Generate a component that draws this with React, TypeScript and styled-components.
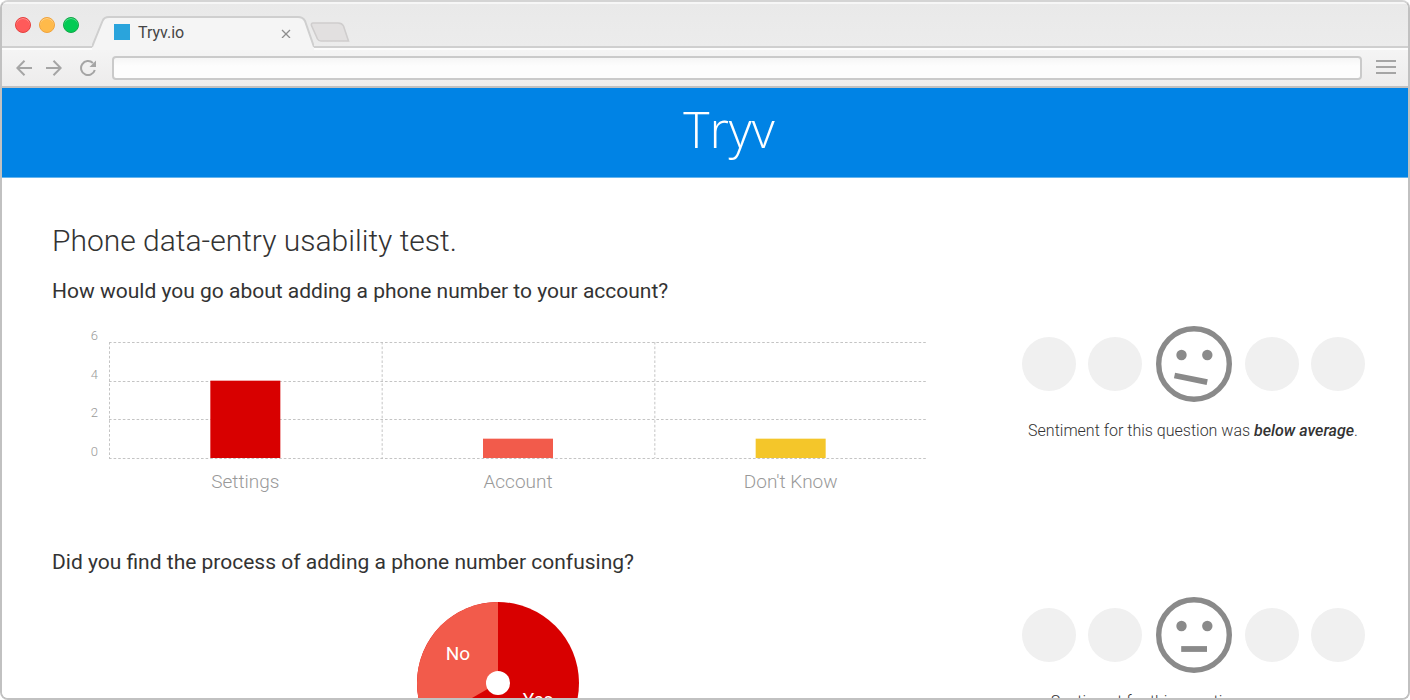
import React from "react";
import styled, { createGlobalStyle } from "styled-components";

const GlobalStyle = createGlobalStyle`
  * { box-sizing: border-box; }
  body { margin: 0; background: #fff; color: #333; font-family: Roboto, sans-serif; }
  h1, h2, p { margin: 0; }
  button { padding: 0; border: 0; background: none; cursor: pointer; }
`;

const Browser = styled.div`
  display: flex;
  flex-direction: column;
  height: 100vh;
  overflow: hidden;
  border: 2px solid #c1c1c1;
  border-top-color: #d4d4d4;
  border-radius: 8px;
`;

const TabStrip = styled.div`
  display: flex;
  flex: none;
  align-items: flex-start;
  height: 46px;
  border-bottom: 2px solid #cfcfcf;
  border-top: 2px solid #f6f6f6;
  background: linear-gradient(#e9e9e9, #ececec);
`;

const WindowButtons = styled.div`
  display: flex;
  gap: 8px;
  padding: 13px 13px 0;
`;

const WindowButton = styled.button<{ $fill: string; $edge: string }>`
  width: 16px;
  height: 16px;
  border: 1px solid ${(p) => p.$edge};
  border-radius: 50%;
  background: ${(p) => p.$fill};
  box-shadow: inset 0 1px 0 rgba(255, 255, 255, 0.35);
`;

const Tab = styled.div`
  position: relative;
  display: flex;
  align-items: center;
  width: 222px;
  height: 34px;
  margin-top: 12px;
  padding: 0 22px 2px;
`;

const TabShape = styled.svg`
  position: absolute;
  inset: 0;
`;

const Favicon = styled.span`
  position: relative;
  width: 16px;
  height: 16px;
  background: #2aa4dc;
`;

const TabTitle = styled.span`
  position: relative;
  flex: 1;
  padding: 2px 0 0 8px;
  font-size: 16px;
  line-height: 20px;
  color: #454545;
`;

const IconButton = styled.button`
  position: relative;
  display: flex;
  flex: none;
  color: #a5a5a5;
`;

const NewTab = styled(IconButton)`
  margin: 18px 0 0 -4px;
`;

const MenuButton = styled(IconButton)`
  margin-bottom: 2px;
`;

const Toolbar = styled.div`
  display: flex;
  flex: none;
  align-items: center;
  height: 40px;
  padding: 0 12px 0 14px;
  border-top: 2px solid #fcfcfc;
  border-bottom: 2px solid #c1c0c0;
  background: linear-gradient(#f4f4f4, #edecec);
`;

const NavButtons = styled.div`
  display: flex;
  gap: 14px;
  margin-right: 16px;
`;

const Address = styled.input`
  flex: 1;
  min-width: 0;
  height: 24px;
  margin-right: 14px;
  padding: 0 8px;
  border: 2px solid #cacaca;
  border-radius: 4px;
  background: linear-gradient(#f6f6f6, #fdfdfd 8px);
  font: 14px Roboto, sans-serif;
  outline: none;
`;

const Page = styled.div`
  flex: 1;
  min-height: 0;
  overflow: hidden;
  background: #fff;
`;

const Banner = styled.header`
  height: 90px;
  padding-left: 48px;
  border-bottom: 1px solid #66b5ee;
  background: #0083e5;
  color: #fff;
  text-align: center;
  font: 300 50px/82px "Open Sans", sans-serif;
`;

const Content = styled.main`
  padding: 43px 44px 0 50px;
`;

const Title = styled.h1`
  margin-bottom: 17px;
  font-size: 30px;
  font-weight: 300;
  line-height: 40px;
`;

const QuestionBlock = styled.section`
  display: grid;
  grid-template-columns: minmax(0, 1fr) 342px;
  column-gap: 79px;
  align-content: start;
  min-height: 271px;
`;

const QuestionTitle = styled.h2`
  grid-column: 1 / -1;
  margin-bottom: 22px;
  font-size: 21px;
  font-weight: 400;
  line-height: 26px;
`;

const ChartArea = styled.div`
  display: grid;
  grid-template-columns: 46px minmax(0, 1fr);
  column-gap: 11px;
  padding-right: 16px;
`;

const AxisLabels = styled.div`
  display: flex;
  flex-direction: column;
  justify-content: space-between;
  height: 132px;
  margin-top: 2px;
  color: #999;
  font-size: 13px;
  font-weight: 300;
  line-height: 16px;
  text-align: right;
`;

const Plot = styled.svg`
  display: block;
  width: 100%;
  height: 118px;
  margin-top: 15px;
`;

const Categories = styled.div`
  display: flex;
  grid-column: 2;
  margin-top: 10px;
  color: #999;
  font-size: 19px;
  font-weight: 300;
  line-height: 24px;
  text-align: center;
`;

const Category = styled.span`
  flex: 1;
`;

const PieArea = styled.div`
  display: flex;
  justify-content: center;
  padding-top: 5px;
`;

const PieLabel = styled.text`
  fill: #fff;
  font-size: 19px;
  text-anchor: middle;
`;

const SentimentArea = styled.aside`
  text-align: center;
`;

const Scale = styled.div`
  display: flex;
  align-items: center;
  gap: 12px;
  margin-bottom: 19px;
`;

const Dot = styled.span`
  flex: none;
  width: 54px;
  height: 54px;
  border-radius: 50%;
  background: #f0f0f0;
`;

const Face = styled.svg`
  flex: none;
  margin: 0 1px 0 2px;
`;

const Caption = styled.p`
  font-size: 16px;
  font-weight: 300;
  line-height: 20px;
  white-space: nowrap;

  em {
    font-weight: 500;
  }
`;

const bars = [
  { label: "Settings", value: 4, color: "#d80000" },
  { label: "Account", value: 1, color: "#f25b4b" },
  { label: "Don't Know", value: 1, color: "#f4c62a" },
];

const MAX = 6;
const PLOT_HEIGHT = 116;

function BarChart() {
  const step = 100 / bars.length;
  return (
    <ChartArea>
      <AxisLabels>
        {[6, 4, 2, 0].map((n) => (
          <span key={n}>{n}</span>
        ))}
      </AxisLabels>
      <Plot role="img" aria-label="Answers by category">
        <g stroke="#c4c4c4" strokeDasharray="2.6 2">
          {[0, 2, 4, 6].map((n) => {
            const y = Math.round(PLOT_HEIGHT * (1 - n / MAX)) + 1.5;
            return <line key={n} x1="0" x2="100%" y1={y} y2={y} />;
          })}
          {bars.map((b, i) => (
            <svg key={b.label} x={`${i * step}%`} overflow="visible">
              <line x1="0.5" x2="0.5" y1="1" y2={PLOT_HEIGHT + 1} />
            </svg>
          ))}
        </g>
        {bars.map((b, i) => {
          const h = (PLOT_HEIGHT * b.value) / MAX;
          return (
            <svg key={b.label} x={`${(i + 0.5) * step}%`} overflow="visible">
              <rect x="-35" width="70" y={PLOT_HEIGHT + 1 - h} height={h} fill={b.color} />
            </svg>
          );
        })}
      </Plot>
      <Categories>
        {bars.map((b) => (
          <Category key={b.label}>{b.label}</Category>
        ))}
      </Categories>
    </ChartArea>
  );
}

function PieChart() {
  return (
    <PieArea>
      <svg width="162" height="162" viewBox="-81 -81 162 162" role="img" aria-label="Yes and No answers">
        <circle r="81" fill="#d80000" />
        <path d="M0 0 L-70.15 40.5 A81 81 0 0 1 0 -81 Z" fill="#f25b4b" />
        <circle r="12" fill="#fff" />
        <PieLabel x="-40" y="-23">No</PieLabel>
        <PieLabel x="40" y="23">Yes</PieLabel>
      </svg>
    </PieArea>
  );
}

function Sentiment({ mouth, rating }: { mouth: string; rating: string }) {
  return (
    <SentimentArea>
      <Scale>
        <Dot />
        <Dot />
        <Face width="76" height="76" viewBox="0 0 76 76" aria-hidden="true">
          <circle cx="38" cy="38" r="35.3" fill="none" stroke="#8a8a8a" strokeWidth="5.4" />
          <circle cx="25.5" cy="29" r="5.2" fill="#8a8a8a" />
          <circle cx="51.3" cy="29" r="5.2" fill="#8a8a8a" />
          <path d={mouth} stroke="#8a8a8a" strokeWidth="5.8" />
        </Face>
        <Dot />
        <Dot />
      </Scale>
      <Caption>
        Sentiment for this question was <em>{rating}</em>.
      </Caption>
    </SentimentArea>
  );
}

export default function App() {
  return (
    <Browser>
      <GlobalStyle />
      <TabStrip>
        <WindowButtons>
          <WindowButton aria-label="Close window" $fill="#ff5a5a" $edge="#e5403e" />
          <WindowButton aria-label="Minimize window" $fill="#ffba4a" $edge="#f0a33c" />
          <WindowButton aria-label="Zoom window" $fill="#02cb54" $edge="#12a748" />
        </WindowButtons>
        <Tab>
          <TabShape width="222" height="34" viewBox="0 0 222 34" aria-hidden="true">
            <path d="M0 34 V31 L10.5 5 Q12 1 17 1 H206 Q211 1 213 5 L222 31 V34 Z" fill="#f5f5f5" />
            <path d="M0 31 L10.5 5 Q12 1 17 1 H206 Q211 1 213 5 L222 31" fill="none" stroke="#cfcfcf" strokeWidth="2" />
          </TabShape>
          <Favicon />
          <TabTitle>Tryv.io</TabTitle>
          <IconButton aria-label="Close tab">
            <svg width="12" height="12" viewBox="0 0 12 12" fill="none" stroke="#8e8e8e" strokeWidth="1.3">
              <path d="M2 4 L10 12 M10 4 L2 12" />
            </svg>
          </IconButton>
        </Tab>
        <NewTab aria-label="New tab">
          <svg width="40" height="20" viewBox="0 0 40 20">
            <path d="M3 1 H28 Q32 1 33.5 4 L38.5 19 H11 Q8.5 19 7.5 17 L1.5 3.5 Q1 1 3 1 Z" fill="#e2e0e0" stroke="#cfcdcd" strokeWidth="1.6" />
          </svg>
        </NewTab>
      </TabStrip>
      <Toolbar>
        <NavButtons>
          <IconButton aria-label="Back">
            <svg width="16" height="16" viewBox="0 0 16 16" fill="none" stroke="currentColor" strokeWidth="2">
              <path d="M16 8 H1.5 M8.5 .8 L1.3 8 L8.5 15.2" />
            </svg>
          </IconButton>
          <IconButton aria-label="Forward">
            <svg width="16" height="16" viewBox="0 0 16 16" fill="none" stroke="currentColor" strokeWidth="2">
              <path d="M0 8 H14.5 M7.5 .8 L14.7 8 L7.5 15.2" />
            </svg>
          </IconButton>
          <IconButton aria-label="Reload">
            <svg width="20" height="16" viewBox="-4 0 20 16" fill="none" stroke="currentColor" strokeWidth="2">
              <path d="M14.8 10 A7 7 0 1 1 12.9 3" />
              <path d="M16 .5 V7 H9.5 Z" fill="currentColor" stroke="none" />
            </svg>
          </IconButton>
        </NavButtons>
        <Address type="text" aria-label="Address" />
        <MenuButton aria-label="Menu">
          <svg width="20" height="14" viewBox="0 0 20 14" fill="currentColor">
            <path d="M0 0 H20 V2 H0 Z M0 6 H20 V8 H0 Z M0 12 H20 V14 H0 Z" />
          </svg>
        </MenuButton>
      </Toolbar>
      <Page>
        <Banner>Tryv</Banner>
        <Content>
          <Title>Phone data-entry usability test.</Title>
          <QuestionBlock>
            <QuestionTitle>How would you go about adding a phone number to your account?</QuestionTitle>
            <BarChart />
            <Sentiment mouth="M18.5 49.5 L51.2 56.2" rating="below average" />
          </QuestionBlock>
          <QuestionBlock>
            <QuestionTitle>Did you find the process of adding a phone number confusing?</QuestionTitle>
            <PieChart />
            <Sentiment mouth="M25.2 52 H51" rating="average" />
          </QuestionBlock>
        </Content>
      </Page>
    </Browser>
  );
}
